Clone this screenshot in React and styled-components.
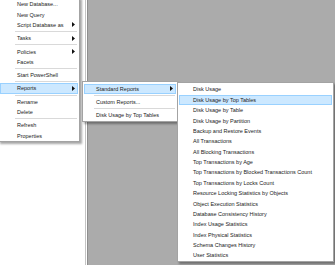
import React from "react";
import styled, { createGlobalStyle, css } from "styled-components";

const Global = createGlobalStyle`
  html, body { margin: 0; padding: 0; width: 335px; height: 265px; overflow: hidden; background: #fff; }
  #root { width: 335px; height: 265px; }
`;

const Screen = styled.div`
  position: relative;
  display: flex;
  width: 335px;
  height: 265px;
  overflow: hidden;
  font-family: "Liberation Sans", Arial, sans-serif;
`;

const Explorer = styled.div`
  flex: none;
  width: 85px;
  background: #fff;
  border-right: 1px solid #c4c4c4;
`;

const Workspace = styled.div`
  flex: 1;
  background: #ababab;
  border-left: 1px solid #fff;
  box-shadow: inset 1px 0 0 #8f8f8f;
`;

const Menu = styled.div`
  position: absolute;
  left: ${(p) => p.$left}px;
  top: ${(p) => p.$top}px;
  width: ${(p) => p.$width}px;
  box-sizing: border-box;
  display: flex;
  flex-direction: column;
  padding: 1.5px 1px 0.6px;
  background: #fff;
  border: 1px solid #a3a3a3;
  box-shadow: 2px 2px 2px rgba(0, 0, 0, 0.35);
`;

const Item = styled.div`
  display: flex;
  align-items: center;
  height: ${(p) => p.$h}px;
  padding-left: ${(p) => p.$indent}px;
  font-size: 5.5px;
  color: #222;
  white-space: nowrap;
  ${(p) =>
    p.$active &&
    css`
      background: #cce8ff;
      box-shadow: inset 0 0 0 1px #99d1ff;
    `}
`;

const Arrow = styled.svg`
  margin-left: auto;
  margin-right: 3.5px;
  width: 3px;
  height: 5px;
  flex: none;
`;

const Separator = styled.div`
  display: flex;
  align-items: center;
  height: 3.2px;
  padding-left: ${(p) => p.$indent - 2.5}px;
  padding-right: 1px;
  &::after {
    content: "";
    flex: 1;
    height: 1px;
    background: #d9d9d9;
  }
`;

const SEP = "-";

const contextItems = [
  { t: "New Database..." },
  { t: "New Query" },
  { t: "Script Database as", sub: true },
  SEP,
  { t: "Tasks", sub: true },
  SEP,
  { t: "Policies", sub: true },
  { t: "Facets" },
  SEP,
  { t: "Start PowerShell" },
  SEP,
  { t: "Reports", sub: true, active: true },
  SEP,
  { t: "Rename" },
  { t: "Delete" },
  SEP,
  { t: "Refresh" },
  { t: "Properties" },
];

const reportItems = [
  { t: "Standard Reports", sub: true, active: true },
  SEP,
  { t: "Custom Reports..." },
  SEP,
  { t: "Disk Usage by Top Tables" },
];

const standardItems = [
  "Disk Usage",
  "Disk Usage by Top Tables",
  "Disk Usage by Table",
  "Disk Usage by Partition",
  "Backup and Restore Events",
  "All Transactions",
  "All Blocking Transactions",
  "Top Transactions by Age",
  "Top Transactions by Blocked Transactions Count",
  "Top Transactions by Locks Count",
  "Resource Locking Statistics by Objects",
  "Object Execution Statistics",
  "Database Consistency History",
  "Index Usage Statistics",
  "Index Physical Statistics",
  "Schema Changes History",
  "User Statistics",
].map((t, i) => ({ t, active: i === 1 }));

function MenuList({ items, indent, left, top, width, itemHeight }) {
  return (
    <Menu $left={left} $top={top} $width={width}>
      {items.map((it, i) =>
        it === SEP ? (
          <Separator key={i} $indent={indent} />
        ) : (
          <Item key={i} $indent={indent} $h={itemHeight} $active={it.active}>
            {it.t}
            {it.sub && (
              <Arrow viewBox="0 0 3 5">
                <path d="M0 0 L3 2.5 L0 5 Z" fill="#111" />
              </Arrow>
            )}
          </Item>
        )
      )}
    </Menu>
  );
}

export default function App() {
  return (
    <>
      <Global />
      <Screen>
        <Explorer />
        <Workspace />
        <MenuList items={contextItems} indent={17} left={-2} top={-3.2} width={82} itemHeight={10.2} />
        <MenuList items={reportItems} indent={12} left={82} top={81} width={96} itemHeight={10.2} />
        <MenuList items={standardItems} indent={14} left={177} top={81.8} width={157} itemHeight={10.375} />
      </Screen>
    </>
  );
}
